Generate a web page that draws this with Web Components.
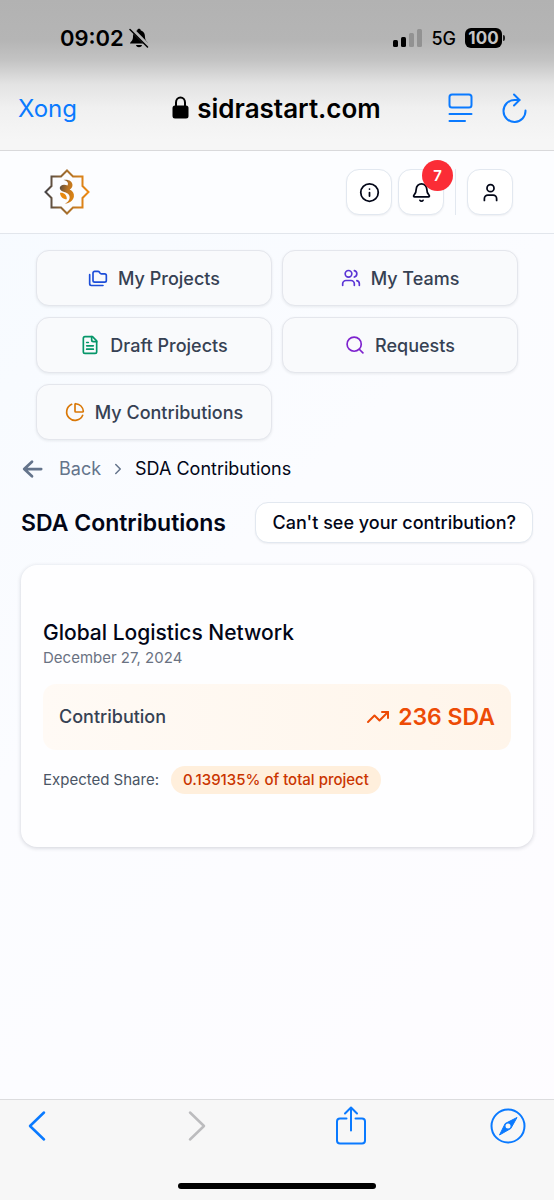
<!DOCTYPE html>
<html lang="en">
<head>
<meta charset="utf-8">
<meta name="viewport" content="width=device-width, initial-scale=1">
<title>SDA Contributions</title>
<style>
  body {
    margin: 0;
    min-height: 100vh;
    display: flex;
    flex-direction: column;
    font-family: Inter, "Liberation Sans", sans-serif;
    color: #020617;
    background: linear-gradient(135deg, #f5faff 0%, #fbfcff 45%, #fefcff 100%);
  }
  main {
    flex: 1;
  }
</style>
</head>
<body>
  <phone-header host="sidrastart.com" time="09:02"></phone-header>

  <site-header notifications="7"></site-header>

  <main>
    <quick-nav>
      <quick-link icon="folders" color="#1d4ed8">My Projects</quick-link>
      <quick-link icon="users" color="#5b35d5">My Teams</quick-link>
      <quick-link icon="file" color="#059669">Draft Projects</quick-link>
      <quick-link icon="search" color="#7e22ce">Requests</quick-link>
      <quick-link icon="pie" color="#d97706">My Contributions</quick-link>
    </quick-nav>

    <bread-crumb>SDA Contributions</bread-crumb>

    <page-heading>
      SDA Contributions
      <span slot="action">Can't see your contribution?</span>
    </page-heading>

    <contribution-card amount="236 SDA" share="0.139135% of total project">
      <span slot="name">Global Logistics Network</span>
      <span slot="date">December 27, 2024</span>
    </contribution-card>
  </main>

  <browser-toolbar></browser-toolbar>

<script>
  // 24x24 stroke icons
  const ICONS = {
    folders: '<path d="M20 17a2 2 0 0 0 2-2V9a2 2 0 0 0-2-2h-3.9a2 2 0 0 1-1.69-.9l-.81-1.2a2 2 0 0 0-1.67-.9H8a2 2 0 0 0-2 2v9a2 2 0 0 0 2 2Z"/><path d="M2 8v11a2 2 0 0 0 2 2h14"/>',
    users: '<path d="M16 21v-2a4 4 0 0 0-4-4H6a4 4 0 0 0-4 4v2"/><circle cx="9" cy="7" r="4"/><path d="M22 21v-2a4 4 0 0 0-3-3.87M16 3.13a4 4 0 0 1 0 7.75"/>',
    file: '<path d="M15 2H6a2 2 0 0 0-2 2v16a2 2 0 0 0 2 2h12a2 2 0 0 0 2-2V7Z"/><path d="M14 2v4a2 2 0 0 0 2 2h4M10 9H8M16 13H8M16 17H8"/>',
    search: '<circle cx="11" cy="11" r="8.5"/><path d="m21.5 21.5-4.4-4.4"/>',
    pie: '<path d="M21 12c.552 0 1.005-.449.95-.998a10 10 0 0 0-8.953-8.951c-.55-.055-.998.398-.998.95v8a1 1 0 0 0 1 1z"/><path d="M21.21 15.89A10 10 0 1 1 8 2.83"/>',
    info: '<circle cx="12" cy="12" r="10"/><path d="M12 16v-4M12 8h.01"/>',
    bell: '<path d="M10.27 21a2 2 0 0 0 3.46 0"/><path d="M3.26 15.33A1 1 0 0 0 4 17h16a1 1 0 0 0 .74-1.67C19.41 13.96 18 12.5 18 8A6 6 0 0 0 6 8c0 4.5-1.41 5.96-2.74 7.33"/>',
    user: '<circle cx="12" cy="7" r="4"/><path d="M19 21v-2a4 4 0 0 0-4-4H9a4 4 0 0 0-4 4v2"/>',
    arrowLeft: '<path d="m12 20-8.5-8L12 4M3.5 12H22"/>',
    chevron: '<path d="m9 18 6-6-6-6"/>',
    trend: '<path d="M16 7h6v6"/><path d="m22 7-8.5 8.5-5-5L2 17"/>'
  };

  function icon(name, size, width = 2) {
    return `<svg class="${name}" width="${size}" height="${size}" viewBox="0 0 24 24" fill="none" stroke="currentColor"
      stroke-width="${width}" stroke-linecap="round" stroke-linejoin="round" aria-hidden="true">${ICONS[name]}</svg>`;
  }

  const BASE = `
    * { box-sizing: border-box; }
    svg { display: block; flex: none; }
    button { font: inherit; color: inherit; margin: 0; padding: 0; border: 0; background: none; cursor: pointer; }
    a { color: inherit; text-decoration: none; }
  `;

  /* Status bar and address bar of the in-app browser */
  class PhoneHeader extends HTMLElement {
    constructor() {
      super();
      this.attachShadow({ mode: 'open' });
    }

    connectedCallback() {
      this.shadowRoot.innerHTML = `
        <style>
          ${BASE}
          :host {
            display: block;
            color: #000;
            border-bottom: 1px solid #d9d9db;
            background: linear-gradient(#b2b2b2 0, #b5b5b5 40px, #c3c3c3 60px, #e3e3e3 84px, #f0f0f0 108px, #f6f6f6 140px);
          }
          .status, .left, .right, .site, .tools { display: flex; align-items: center; }
          .status { justify-content: space-between; height: 76px; padding: 0 49px 0 60px; }
          .left { gap: 5px; font-size: 22px; font-weight: 600; }
          .right { gap: 9px; font-size: 18px; font-weight: 500; }
          .battery { display: flex; align-items: center; gap: 1px; }
          .level {
            width: 37px; height: 20px; border-radius: 6px;
            background: #000; color: #c4c4c4;
            font-size: 17px; line-height: 20px; font-weight: 700; text-align: center;
          }
          .cap { width: 2px; height: 6px; border-radius: 0 2px 2px 0; background: #222; }
          .address {
            display: grid; grid-template-columns: 1fr auto 1fr; align-items: center;
            height: 74px; padding: 0 19px 10px 18px;
          }
          .done { justify-self: start; color: #0a7aff; font-size: 24px; }
          .site { gap: 8px; font-size: 26px; font-weight: 600; }
          .tools { justify-self: end; gap: 14px; color: #0a7aff; }
        </style>
        <div class="status">
          <div class="left">
            <span>${this.getAttribute('time')}</span>
            <svg width="20" height="20" viewBox="0 0 20 20" aria-label="Silent">
              <path d="M1 15.500c0-1.500 3-2.500 3-6.500C4 5 6 3 8.200 2.500 8.200 0 11.800 0 11.800 2.500 14 3 16 5 16 9c0 4 3 5 3 6.500zM7 17h6c-.5 3-5.500 3-6 0z"/>
              <path d="M2 .5 19.500 18" stroke="#b6b6b6" stroke-width="4"/>
              <path d="m1 1.500 17.500 17.500" stroke="#000" stroke-width="1.500" stroke-linecap="round"/>
            </svg>
          </div>
          <div class="right">
            <svg width="29" height="18" viewBox="0 0 29 18" aria-label="Signal">
              <rect y="11" width="5" height="7" rx="1.500"/>
              <rect x="8" y="8" width="5" height="10" rx="1.500"/>
              <rect x="16" y="4" width="5" height="14" rx="1.500" fill="#929292"/>
              <rect x="24" width="5" height="18" rx="1.500" fill="#929292"/>
            </svg>
            <span>5G</span>
            <div class="battery"><div class="level">100</div><div class="cap"></div></div>
          </div>
        </div>
        <div class="address">
          <button class="done">Xong</button>
          <div class="site">
            <svg width="17" height="24" viewBox="0 0 17 24" aria-hidden="true">
              <rect x=".5" y="9.500" width="16" height="13" rx="2.500"/>
              <path d="M4 11V6.500a4.500 5 0 0 1 9 0V11" fill="none" stroke="#000" stroke-width="2"/>
            </svg>
            <span>${this.getAttribute('host')}</span>
          </div>
          <div class="tools">
            <button aria-label="Page menu">
              <svg width="40" height="32" viewBox="0 0 40 32" fill="none" stroke="currentColor" stroke-width="2" stroke-linecap="round">
                <rect x="8.500" y="2.500" width="22" height="13" rx="2.500"/>
                <path d="M8.500 22h22M8.500 29h15.500"/>
              </svg>
            </button>
            <button aria-label="Reload">
              <svg width="40" height="32" viewBox="0 0 40 32" fill="none" stroke="currentColor" stroke-width="2" stroke-linecap="round" stroke-linejoin="round">
                <path d="M30.500 18.500A11 11 0 1 1 19.500 8h5"/>
                <path d="m19 2.500 5.500 5.500-5.500 5.500"/>
              </svg>
            </button>
          </div>
        </div>
      `;
    }
  }

  class SiteHeader extends HTMLElement {
    constructor() {
      super();
      this.attachShadow({ mode: 'open' });
    }

    connectedCallback() {
      this.shadowRoot.innerHTML = `
        <style>
          ${BASE}
          :host { display: block; background: #fcfdff; border-bottom: 1px solid #e2e6ec; }
          header { display: flex; align-items: center; justify-content: space-between; height: 82px; padding: 0 41px 0 44px; }
          nav { display: flex; align-items: center; gap: 6px; }
          nav button {
            position: relative;
            display: grid; place-items: center;
            width: 46px; height: 46px;
            border: 1px solid #e2e8f0; border-radius: 13px;
            background: #fff; color: #020617;
            box-shadow: 0 1px 2px rgba(15, 23, 42, .06);
          }
          /* counter hangs over the corner of the bell button */
          .count {
            position: absolute; top: -10px; right: -10px;
            width: 31px; height: 31px; border-radius: 50%;
            background: #fb2c36; color: #fff;
            font-size: 15px; line-height: 31px; font-weight: 600; text-align: center;
          }
          .line { width: 1px; height: 46px; margin: 0 5px; background: #e2e8f0; }
        </style>
        <header>
          <a href="#" aria-label="Home">
            <svg width="46" height="46" viewBox="0 0 46 46">
              <defs>
                <linearGradient id="gold" x1="0" x2="1" y1="0" y2="0">
                  <stop offset="0" stop-color="#454448"/>
                  <stop offset=".5" stop-color="#a8702c"/>
                  <stop offset="1" stop-color="#f08a10"/>
                </linearGradient>
                <linearGradient id="swirl" x1="0" x2="1" y1="0" y2=".4">
                  <stop offset="0" stop-color="#4c4542"/>
                  <stop offset=".6" stop-color="#b87324"/>
                  <stop offset="1" stop-color="#d98214"/>
                </linearGradient>
              </defs>
              <path d="M23 1.500 29 7.500H38.500V17L44.500 23l-6 6v9.500H29l-6 6-6-6H7.500V29l-6-6 6-6V7.500H17Z" fill="none" stroke="url(#gold)" stroke-width="2"/>
              <path d="M19.500 11C24.500 10 28.500 12.500 28.500 16c0 2.200-1.200 3.800-2.800 4.600 3.200 1.600 4.600 3.900 4.200 7-.6 4.200-4.400 6.800-9 7.100 3.400-1.600 5.200-4.400 4.600-7.500-.5-2.600-3.500-3.600-6.500-4.700-3.500-1.300-4-4.300-2-5.800 1.800-1.300 4.500-1 6.500-.2 1.500-2.500-.5-5-4-5.500Z" fill="url(#swirl)"/>
              <path d="M16 23.800c4-.5 7 2 6.800 6.500-4 0-6.500-2.500-6.800-6.500Z" fill="#e8890f"/>
            </svg>
          </a>
          <nav>
            <button aria-label="Information">${icon('info', 21)}</button>
            <button aria-label="Notifications">${icon('bell', 21)}<span class="count">${this.getAttribute('notifications')}</span></button>
            <span class="line"></span>
            <button aria-label="Account">${icon('user', 21)}</button>
          </nav>
        </header>
      `;
    }
  }

  class QuickNav extends HTMLElement {
    constructor() {
      super();
      this.attachShadow({ mode: 'open' });
      this.shadowRoot.innerHTML = `
        <style>
          :host { display: block; padding: 16px 36px 0; }
          nav { display: grid; grid-template-columns: 1fr 1fr; gap: 11px 10px; }
        </style>
        <nav><slot></slot></nav>
      `;
    }
  }

  class QuickLink extends HTMLElement {
    constructor() {
      super();
      this.attachShadow({ mode: 'open' });
    }

    connectedCallback() {
      this.shadowRoot.innerHTML = `
        <style>
          ${BASE}
          :host { display: block; }
          a {
            display: flex; align-items: center; justify-content: center; gap: 10px;
            height: 56px;
            border: 1px solid #e4e6ec; border-radius: 13px;
            background: #f9fafc; color: #364153;
            font-size: 18px; font-weight: 500;
            box-shadow: 0 1px 3px rgba(15, 23, 42, .08);
          }
          svg { color: ${this.getAttribute('color')}; }
        </style>
        <a href="#">${icon(this.getAttribute('icon'), 20)}<span><slot></slot></span></a>
      `;
    }
  }

  class BreadCrumb extends HTMLElement {
    constructor() {
      super();
      this.attachShadow({ mode: 'open' });
      this.shadowRoot.innerHTML = `
        <style>
          ${BASE}
          :host { display: block; padding: 16px 21px 0; font-size: 18px; line-height: 26px; }
          nav, a { display: flex; align-items: center; }
          nav { gap: 8px; }
          a { gap: 16px; color: #64748b; }
          .chevron { color: #64748b; }
        </style>
        <nav>
          <a href="#">${icon('arrowLeft', 22, 3)}Back</a>
          ${icon('chevron', 18)}
          <span><slot></slot></span>
        </nav>
      `;
    }
  }

  class PageHeading extends HTMLElement {
    constructor() {
      super();
      this.attachShadow({ mode: 'open' });
      this.shadowRoot.innerHTML = `
        <style>
          ${BASE}
          :host { display: flex; align-items: center; justify-content: space-between; padding: 20px 21px 0; }
          h1 { margin: 0; font-size: 23px; line-height: 32px; font-weight: 600; }
          button {
            height: 41px; padding: 0 16px;
            border: 1px solid #e2e8f0; border-radius: 13px;
            background: #fff;
            font-size: 18px; font-weight: 500; white-space: nowrap;
            box-shadow: 0 1px 2px rgba(15, 23, 42, .06);
          }
        </style>
        <h1><slot></slot></h1>
        <button><slot name="action"></slot></button>
      `;
    }
  }

  class ContributionCard extends HTMLElement {
    constructor() {
      super();
      this.attachShadow({ mode: 'open' });
    }

    connectedCallback() {
      this.shadowRoot.innerHTML = `
        <style>
          ${BASE}
          :host { display: block; padding: 22px 21px 0; }
          article {
            padding: 54px 22px 53px;
            border-radius: 16px;
            background: #fefeff;
            box-shadow: 0 1px 4px rgba(15, 23, 42, .18);
          }
          h2 { margin: 0; font-size: 21px; line-height: 28px; font-weight: 500; }
          .date { margin: 0; color: #6a7282; font-size: 15px; line-height: 21px; }
          .amount {
            display: flex; align-items: center; justify-content: space-between;
            margin-top: 16px; padding: 16px; border-radius: 13px;
            background: linear-gradient(90deg, #fffaf5, #fff5ea);
            color: #364153; font-size: 18px; line-height: 34px; font-weight: 500;
          }
          .amount strong { display: flex; align-items: center; gap: 8px; color: #ed4b05; font-size: 23px; font-weight: 600; }
          .share { display: flex; align-items: center; gap: 12px; margin-top: 16px; color: #4a5565; font-size: 15px; line-height: 28px; }
          .pill { padding: 0 12px; border-radius: 14px; background: #ffefdc; color: #ca3500; font-weight: 500; }
        </style>
        <article>
          <h2><slot name="name"></slot></h2>
          <p class="date"><slot name="date"></slot></p>
          <div class="amount">
            <span>Contribution</span>
            <strong>${icon('trend', 24)}${this.getAttribute('amount')}</strong>
          </div>
          <div class="share">
            <span>Expected Share:</span>
            <span class="pill">${this.getAttribute('share')}</span>
          </div>
        </article>
      `;
    }
  }

  class BrowserToolbar extends HTMLElement {
    constructor() {
      super();
      this.attachShadow({ mode: 'open' });
      this.shadowRoot.innerHTML = `
        <style>
          ${BASE}
          :host { display: block; border-top: 1px solid #dcdcde; background: #f7f7f7; color: #0a7aff; }
          .row { display: flex; align-items: center; justify-content: space-between; padding: 6px 28px 0 19px; }
          button:disabled { color: #bcbcbe; }
          .home { width: 198px; height: 6px; margin: 37px auto 11px; border-radius: 3px; background: #000; }
        </style>
        <div class="row">
          <button aria-label="Back">
            <svg width="36" height="40" viewBox="0 0 36 40" fill="none" stroke="currentColor" stroke-width="2.500" stroke-linecap="round" stroke-linejoin="round"><path d="M25 6.500 11 20l14 13.500"/></svg>
          </button>
          <button aria-label="Forward" disabled>
            <svg width="36" height="40" viewBox="0 0 36 40" fill="none" stroke="currentColor" stroke-width="2.500" stroke-linecap="round" stroke-linejoin="round"><path d="m14 6.500 14 13.500-14 13.500"/></svg>
          </button>
          <button aria-label="Share">
            <svg width="36" height="40" viewBox="0 0 36 40" fill="none" stroke="currentColor" stroke-width="2" stroke-linecap="round" stroke-linejoin="round">
              <path d="M13.500 12.500H7A3 3 0 0 0 4 15.500v19a3 3 0 0 0 3 3h22a3 3 0 0 0 3-3v-19a3 3 0 0 0-3-3h-6.500"/>
              <path d="M18 24.500V2M12 7.500l6-6 6 6"/>
            </svg>
          </button>
          <button aria-label="Open in Safari">
            <svg width="36" height="40" viewBox="0 0 36 40">
              <circle cx="18" cy="20" r="16.500" fill="none" stroke="currentColor" stroke-width="2"/>
              <path d="M27 11.500 20.800 22.500 9.500 29 15.200 17.500Z" fill="currentColor" stroke="currentColor" stroke-linejoin="round"/>
              <circle cx="18" cy="20" r="2.500" fill="#f7f7f7"/>
            </svg>
          </button>
        </div>
        <div class="home"></div>
      `;
    }
  }

  customElements.define('phone-header', PhoneHeader);
  customElements.define('site-header', SiteHeader);
  customElements.define('quick-nav', QuickNav);
  customElements.define('quick-link', QuickLink);
  customElements.define('bread-crumb', BreadCrumb);
  customElements.define('page-heading', PageHeading);
  customElements.define('contribution-card', ContributionCard);
  customElements.define('browser-toolbar', BrowserToolbar);
</script>
</body>
</html>
